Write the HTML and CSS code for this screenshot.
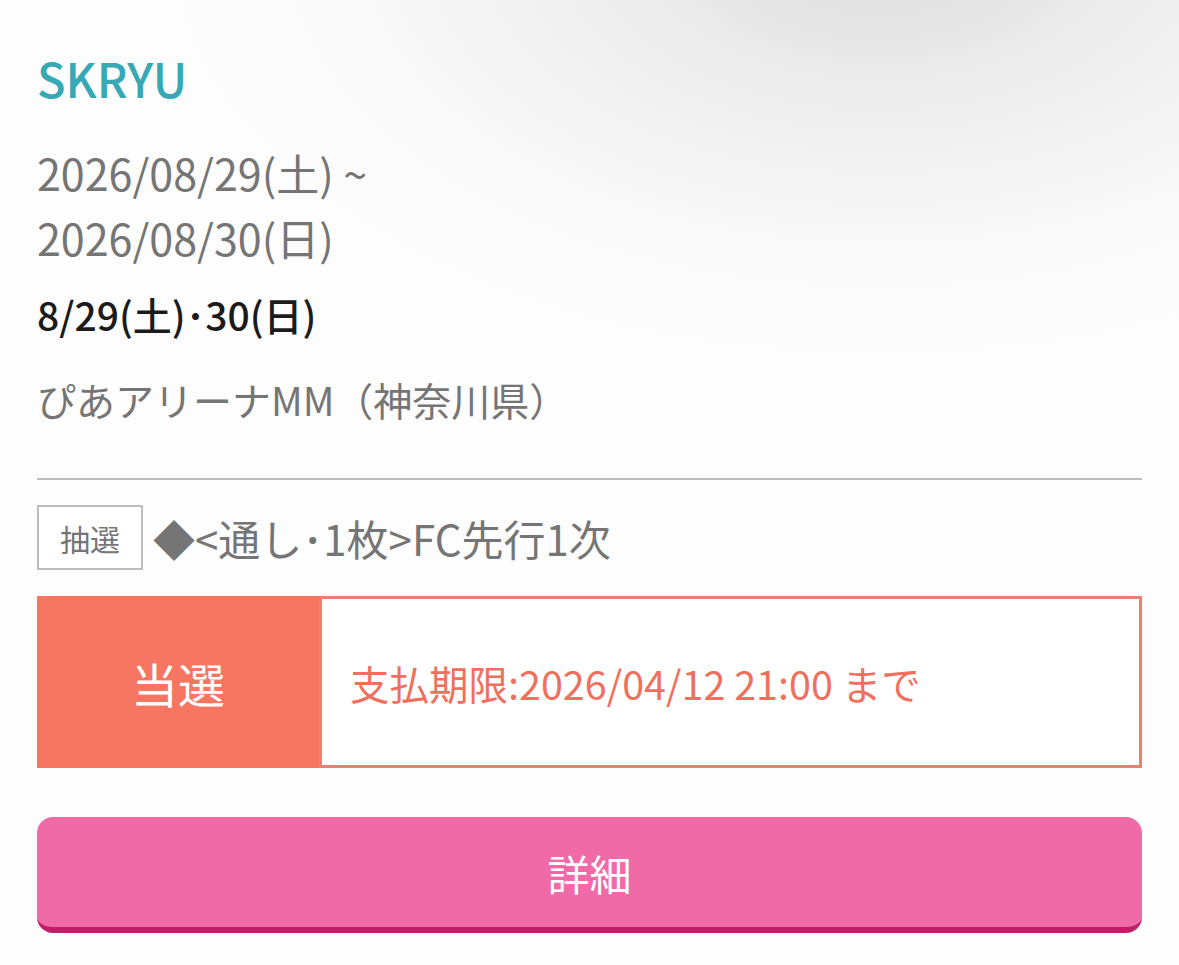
FILE: index.html
```html
<!DOCTYPE html>
<html lang="ja">
<head>
  <meta charset="UTF-8" />
  <meta name="viewport" content="width=device-width, initial-scale=1.0" />
  <title>SKRYU 申込状況</title>
  <link rel="stylesheet" href="styles.css">
</head>
<body>
  <div class="entry">
    <h1 class="artist">SKRYU</h1>
    <div class="period">
      <div>2026/08/29(土) ~</div>
      <div>2026/08/30(日)</div>
    </div>
    <div class="show-days">8/29(土)･30(日)</div>
    <div class="venue">ぴあアリーナMM（神奈川県）</div>

    <hr class="divider">

    <div class="sale">
      <span class="sale-type">抽選</span>
      <span class="sale-name">◆&lt;通し･1枚&gt;FC先行1次</span>
    </div>

    <div class="result">
      <div class="result-label">当選</div>
      <div class="result-detail">支払期限:2026/04/12 21:00 まで</div>
    </div>

    <button class="detail-btn">詳細</button>
  </div>
</body>
</html>
```

FILE: styles.css
```css
html, body {
  margin: 0;
  min-height: 100%;
}
body {
  font-family: 'Noto Sans CJK JP', 'Noto Sans', sans-serif;
  color: #757575;
  background:
    radial-gradient(ellipse 720px 420px at 880px -60px, #dcdcdc 0%, #ececec 35%, #f8f8f8 70%, rgba(255,255,255,0) 100%),
    #fdfdfd;
}
.entry {
  padding: 48px 37px 30px 37px;
}
.artist {
  margin: 0;
  font-size: 47px;
  line-height: 60px;
  font-weight: 500;
  color: #36a9b5;
}
.period {
  margin-top: 32px;
  font-size: 43px;
  line-height: 65px;
}
.show-days {
  margin-top: 19px;
  font-size: 39px;
  line-height: 50px;
  font-weight: 500;
  color: #1b1b1b;
}
.venue {
  margin-top: 35px;
  font-size: 39px;
  line-height: 50px;
}
.divider {
  margin: 54px 0 0 0;
  border: none;
  border-top: 2px solid #bdbdbd;
  height: 0;
}
.sale {
  margin-top: 25px;
  display: flex;
  align-items: center;
  gap: 10px;
}
.sale-type {
  box-sizing: border-box;
  width: 106px;
  height: 65px;
  border: 2px solid #bcbcbc;
  background: #fff;
  display: flex;
  align-items: center;
  justify-content: center;
  font-size: 30px;
}
.sale-name {
  font-size: 42px;
  line-height: 50px;
}
.result {
  margin-top: 26px;
  height: 172px;
  display: flex;
}
.result-label {
  width: 282px;
  flex-shrink: 0;
  background: #f77662;
  color: #fff;
  font-size: 47px;
  display: flex;
  align-items: center;
  justify-content: center;
}
.result-detail {
  flex: 1;
  box-sizing: border-box;
  border: 3px solid #eb8071;
  background: #fff;
  color: #ef705e;
  font-size: 39.5px;
  display: flex;
  align-items: center;
  padding-left: 28px;
}
.detail-btn {
  display: block;
  box-sizing: border-box;
  width: 100%;
  height: 116px;
  margin-top: 49px;
  border: none;
  border-bottom: 6px solid #bf1f69;
  border-radius: 16px;
  background: #f06aa7;
  color: #fff;
  font-family: inherit;
  font-size: 42px;
  cursor: pointer;
}
```
